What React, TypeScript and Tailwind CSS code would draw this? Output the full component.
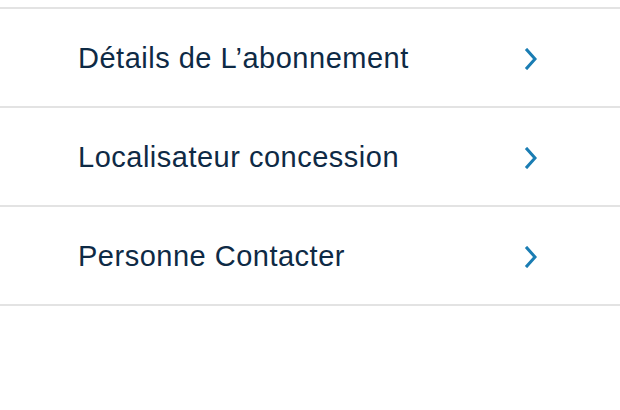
export default function App() {
  const items = ["Détails de L’abonnement", "Localisateur concession", "Personne Contacter"];
  return (
    <div className="w-[620px] h-[410px] bg-white overflow-hidden" style={{ fontFamily: '"Liberation Sans", Arial, sans-serif' }}>
      <div className="h-[7px]" />
      <div className="border-t-2 border-[#e3e3e3]">
        {items.map((t) => (
          <div key={t} className="h-[99px] flex items-center justify-between pl-[78px] pr-[82px] border-b-2 border-[#e3e3e3]">
            <span className="text-[29px] tracking-[0.5px] text-[#0e2a45] leading-none pt-[2px]">{t}</span>
            <svg width="14" height="22" viewBox="0 0 14 22" fill="none" className="mt-[3px]">
              <path d="M3 2 L11 11 L3 20" stroke="#1a7db3" strokeWidth="3" strokeLinecap="square" />
            </svg>
          </div>
        ))}
      </div>
    </div>
  );
}
